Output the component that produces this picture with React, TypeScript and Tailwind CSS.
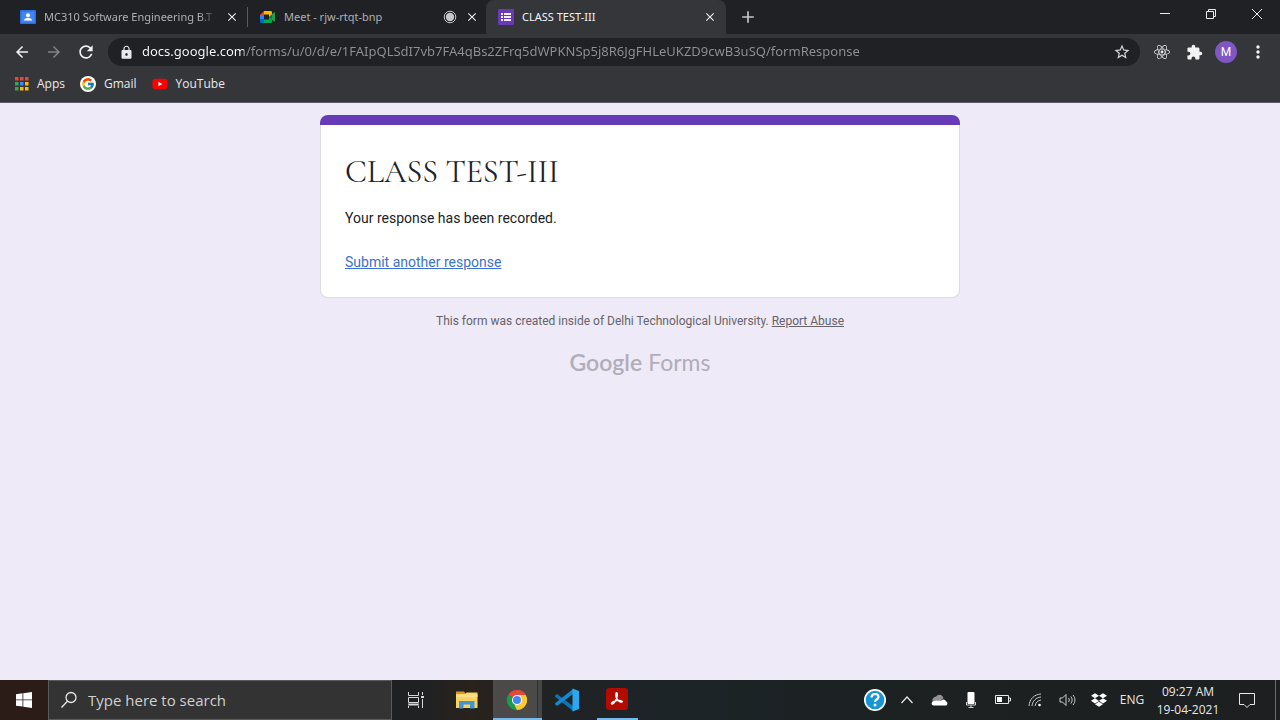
import type { ReactNode } from 'react';
import {
  MdAdd,
  MdArrowBack,
  MdArrowForward,
  MdClose,
  MdExtension,
  MdLock,
  MdMoreVert,
  MdRefresh,
  MdStarBorder,
} from 'react-icons/md';
import { FcGoogle } from 'react-icons/fc';
import { FaReact, FaDropbox, FaYoutube } from 'react-icons/fa';

function ContactsIcon() {
  return (
    <svg viewBox="0 0 16 16" className="size-4 shrink-0" aria-hidden="true">
      <rect y="1" width="16" height="14" rx="1" fill="#2a6fdb" />
      <rect x="1.5" y="2.5" width="13" height="11" fill="#4285f4" />
      <circle cx="8" cy="6.2" r="2" fill="#fff" />
      <path d="M4 11.6c0-2 2.4-2.8 4-2.8s4 .8 4 2.8z" fill="#fff" />
    </svg>
  );
}

function MeetIcon() {
  return (
    <svg viewBox="0 0 16 16" className="size-4 shrink-0" aria-hidden="true">
      <path d="M0 6l4-4v4z" fill="#ea4335" />
      <path d="M0 6h4v4H0z" fill="#2684fc" />
      <path d="M0 10h4v4H1.3A1.3 1.3 0 010 12.700z" fill="#0066da" />
      <path d="M4 2h6.700A1.300 1.300 0 0112 3.300V8H9V5.500H4z" fill="#ffba00" />
      <path d="M4 10.500h5V8h3v4.700a1.300 1.300 0 01-1.300 1.300H4z" fill="#00ac47" />
      <path d="M9 8l5-4.500c.4-.4 1-.1 1 .5v8c0 .6-.6.9-1 .5z" fill="#1fa04c" />
      <path d="M9 8l3-2.700v5.400z" fill="#00832d" />
    </svg>
  );
}

function FormsIcon() {
  return (
    <svg viewBox="0 0 16 16" className="size-4 shrink-0" aria-hidden="true">
      <rect width="16" height="16" rx="1" fill="#673ab7" />
      <path
        d="M3 4h2v2H3zM3 7h2v2H3zM3 10h2v2H3zM6 4h7v2H6zM6 7h7v2H6zM6 10h7v2H6z"
        fill="#f3eefb"
      />
    </svg>
  );
}

function RecordingIcon() {
  return (
    <svg viewBox="0 0 14 14" className="size-3.5 shrink-0" role="img" aria-label="Recording">
      <circle cx="7" cy="7" r="5.800" fill="none" stroke="#c4c6c9" />
      <circle cx="7" cy="7" r="4.200" fill="#c4c6c9" />
    </svg>
  );
}

function AppsIcon() {
  const colors = ['#e5493a', '#e5493a', '#e5493a', '#34a853', '#4285f4', '#fbbc05', '#34a853', '#fbbc05', '#fbbc05'];
  return (
    <svg viewBox="0 0 14 14" className="size-3.5" aria-hidden="true">
      {colors.map((color, i) => (
        <rect key={i} x={(i % 3) * 5} y={Math.floor(i / 3) * 5} width="3.500" height="3.500" fill={color} />
      ))}
    </svg>
  );
}

function Tab({ icon, title, active, recording }: { icon: ReactNode; title: string; active?: boolean; recording?: boolean }) {
  return (
    <div
      className={
        active
          ? 'flex h-full min-w-0 flex-[0_1_240px] items-center gap-2 rounded-t-lg bg-[#35363a] pr-[9px] pl-3 text-[#f1f3f4]'
          : 'flex h-full min-w-0 flex-[0_1_238px] items-center gap-2 pr-[7px] pl-3 text-[#aeb1b5]'
      }
    >
      {icon}
      <button
        className={
          active || recording
            ? 'min-w-0 flex-1 overflow-hidden text-left whitespace-nowrap'
            : 'min-w-0 flex-1 overflow-hidden mask-r-from-90% text-left whitespace-nowrap'
        }
      >
        {title}
      </button>
      {recording && <RecordingIcon />}
      <button aria-label={`Close ${title}`} className="shrink-0 text-[#e8eaed]">
        <MdClose className="size-3.5" />
      </button>
    </div>
  );
}

function BarButton({ label, children }: { label: string; children: ReactNode }) {
  return (
    <button aria-label={label} className="flex h-7 w-8 shrink-0 items-center justify-center text-[#f1f3f4]">
      {children}
    </button>
  );
}

function TabStrip() {
  return (
    <header className="flex h-[34px] items-center bg-[#202124] pl-2 font-['Noto_Sans',sans-serif] text-[11px]">
      <Tab icon={<ContactsIcon />} title="MC310 Software Engineering B.T" />
      <div className="ml-px h-5 w-px shrink-0 bg-[#5a5c60]" />
      <Tab icon={<MeetIcon />} title="Meet - rjw-rtqt-bnp" recording />
      <Tab icon={<FormsIcon />} title="CLASS TEST-III" active />
      <button aria-label="New tab" className="ml-3 text-[#c4c6c9]">
        <MdAdd className="size-5" />
      </button>
      <div className="mb-1.5 ml-auto flex">
        <button aria-label="Minimize" className="flex w-[46px] justify-center">
          <svg viewBox="0 0 12 12" className="size-3" fill="none" stroke="#e8eaed">
            <path d="M1 5.500h10" />
          </svg>
        </button>
        <button aria-label="Restore" className="flex w-[46px] justify-center">
          <svg viewBox="0 0 12 12" className="size-3" fill="none" stroke="#e8eaed">
            <path d="M1.500 3.500h7v7h-7zM3.500 3.500v-2h7v7h-2" />
          </svg>
        </button>
        <button aria-label="Close window" className="flex w-[46px] justify-center">
          <svg viewBox="0 0 12 12" className="size-3" fill="none" stroke="#e8eaed">
            <path d="M1 1l10 10M11 1L1 11" />
          </svg>
        </button>
      </div>
    </header>
  );
}

function Toolbar() {
  return (
    <div className="flex h-9 items-center bg-[#35363a] px-1.5">
      <BarButton label="Back">
        <MdArrowBack className="size-[18px]" />
      </BarButton>
      <BarButton label="Forward">
        <MdArrowForward className="size-[18px] text-[#818387]" />
      </BarButton>
      <BarButton label="Reload">
        <MdRefresh className="size-5" />
      </BarButton>
      <label className="mx-1.5 flex h-7 min-w-0 flex-1 items-center gap-2 rounded-full bg-[#202124] pr-0.5 pl-[11px]">
        <MdLock className="size-[15px] shrink-0 text-[#e8eaed]" />
        <input
          aria-label="Address"
          className="min-w-0 flex-1 bg-[linear-gradient(90deg,#ffffff_102px,#8f9195_102px)] bg-clip-text font-['Noto_Sans',sans-serif] text-[13px] text-transparent outline-none"
          defaultValue="docs.google.com/forms/u/0/d/e/1FAIpQLSdI7vb7FA4qBs2ZFrq5dWPKNSp5j8R6JgFHLeUKZD9cwB3uSQ/formResponse"
        />
        <BarButton label="Bookmark this page">
          <MdStarBorder className="size-[18px] text-[#d5d7da]" />
        </BarButton>
      </label>
      <BarButton label="React Developer Tools">
        <FaReact className="size-4 text-[#e8eaed]" />
      </BarButton>
      <BarButton label="Extensions">
        <MdExtension className="size-[17px]" />
      </BarButton>
      <BarButton label="Profile">
        <span className="flex size-[22px] items-center justify-center rounded-full bg-[#7e57c2] font-['Roboto',sans-serif] text-xs text-white">
          M
        </span>
      </BarButton>
      <BarButton label="Menu">
        <MdMoreVert className="size-5" />
      </BarButton>
    </div>
  );
}

function Bookmarks() {
  return (
    <nav className="flex h-8 items-center gap-[15px] bg-[#35363a] px-[15px] pb-1 text-xs text-[#e8eaed]">
      <a href="#apps" className="flex items-center gap-2">
        <AppsIcon />
        Apps
      </a>
      <a href="#gmail" className="flex items-center gap-2">
        <span className="flex size-4 items-center justify-center rounded-full bg-white">
          <FcGoogle className="size-3.5" />
        </span>
        Gmail
      </a>
      <a href="#youtube" className="flex items-center gap-2">
        <span className="flex h-2 w-4 items-center justify-center bg-[linear-gradient(90deg,transparent_5px,#ffffff_5px,#ffffff_11px,transparent_11px)]">
          <FaYoutube className="size-4 shrink-0 text-[#f00]" />
        </span>
        YouTube
      </a>
    </nav>
  );
}

function FormResponse() {
  return (
    <main className="flex flex-1 flex-col items-center border-t border-[#5a5862] bg-[#eeeaf7] px-4 pt-3 font-['Roboto',sans-serif]">
      <section className="w-full max-w-[640px]">
        <div className="h-2.5 rounded-t-lg bg-[#673ab7]" />
        <div className="rounded-b-lg border border-t-0 border-[#dadce0] bg-white px-6 pt-[25px] pb-[23px]">
          <h1 className="font-['Cormorant_Garamond','Liberation_Serif',serif] text-[32px] leading-11 text-[#202124]">
            CLASS TEST-III
          </h1>
          <p className="mt-3.5 text-sm leading-5 text-[#202124]">Your response has been recorded.</p>
          <a href="#another" className="mt-6 inline-block text-sm leading-5 text-[#3b72cf] underline">
            Submit another response
          </a>
        </div>
      </section>
      <p className="mt-[15px] text-xs leading-4 text-[#66636b]">
        This form was created inside of Delhi Technological University.{' '}
        <a href="#report" className="underline">
          Report Abuse
        </a>
      </p>
      <a href="#forms" className="mt-[17px] flex gap-1.5 font-['Lato',sans-serif] text-[23px] leading-8 text-[#b1adb9]">
        <span className="font-semibold">Google</span>
        <span>Forms</span>
      </a>
    </main>
  );
}

function TrayButton({ label, children }: { label: string; children: ReactNode }) {
  return (
    <button aria-label={label} className="flex h-full w-8 shrink-0 items-center justify-center">
      {children}
    </button>
  );
}

function Taskbar() {
  return (
    <footer className="flex h-10 items-center bg-[linear-gradient(90deg,#2b1c18_0,#2b1c18_48px,#1f2123_420px,#29221d_470px,#202225_560px,#1c2427_680px,#1c2122_900px,#1d1f20_100%)] text-[#e8e8e8]">
      <button aria-label="Start" className="flex h-full w-12 shrink-0 items-center justify-center">
        <svg viewBox="0 0 16 16" className="size-4" fill="#fff">
          <path d="M0 2.200l6.500-.9v6.200H0zM7.300 1.200L16 0v7.500H7.300zM0 8.300h6.500v6.300L0 13.700zM7.300 8.300H16V16l-8.700-1.200z" />
        </svg>
      </button>
      <label className="flex h-full min-w-0 flex-[0_1_344px] items-center gap-2.5 border border-[#5a5a5a] bg-[#333333] px-[11px]">
        <svg viewBox="0 0 18 18" className="size-[18px] shrink-0" fill="none" stroke="#e8e8e8" strokeWidth="1.300">
          <circle cx="11" cy="6.500" r="5" />
          <path d="M7.400 10.200L1.500 16.500" />
        </svg>
        <input
          aria-label="Search Windows"
          placeholder="Type here to search"
          className="min-w-0 flex-1 bg-transparent text-[15px] outline-none placeholder:text-[#d0d0d0]"
        />
      </label>
      <button aria-label="Task view" className="flex h-full w-12 shrink-0 items-center justify-center">
        <svg viewBox="0 0 18 18" className="size-[18px]" fill="none" stroke="#d8d8d8">
          <path d="M1.500 1v3.500h10V1M1.500 6.500h10v5h-10zM1.500 17v-3.500h10V17M15.500 1v3M15.500 8v9" />
          <path d="M1 12.500h11M1 14.500h11" stroke="#77787a" />
          <path d="M14 6h3" strokeWidth="2" />
        </svg>
      </button>
      <button aria-label="File Explorer" className="ml-0.5 flex h-full w-[50px] shrink-0 items-center justify-center">
        <svg viewBox="0 0 22 20" className="h-5 w-[22px]">
          <path d="M0 1.500h8l2 2.500H0z" fill="#d99a1e" />
          <path d="M0 4h9l1.500-1.500H21.500V18H0z" fill="#fbd160" />
          <path d="M0 4.500h21.500V7H0z" fill="#ffe08a" />
          <path d="M3 11h15.500v7.500H14v-4H7.500v4H3z" fill="#3e96d4" />
        </svg>
      </button>
      <button
        aria-label="Google Chrome"
        className="ml-px flex h-full w-[49px] shrink-0 items-center justify-center border-b-2 border-[#76b9ed] bg-[linear-gradient(90deg,#4b4a49_44px,#303131_44px,#303131_45px,#454646_45px)] pt-0.5 pr-0.5"
      >
        <svg viewBox="0 0 24 24" className="size-[22px]">
          <path d="M12 12L2.470 6.500A11 11 0 0121.530 6.500z" fill="#e5473a" />
          <path d="M12 12L21.530 6.500A11 11 0 0112 23z" fill="#fcc934" />
          <path d="M12 12L12 23A11 11 0 012.470 6.500z" fill="#1e9b4f" />
          <path d="M12 6.500h9.530L16.800 14.700zM16.760 14.750L12 23l-3-6z" fill="#fcc934" />
          <path d="M12 6.500h9.530A11 11 0 0012 1z" fill="#e5473a" />
          <path d="M7.240 14.750L2.470 6.500 12 12z" fill="#1e9b4f" />
          <circle cx="12" cy="12" r="5.500" fill="#fff" />
          <circle cx="12" cy="12" r="4.400" fill="#4285f4" />
        </svg>
      </button>
      <button aria-label="Visual Studio Code" className="flex h-full w-[50px] shrink-0 items-center justify-center">
        <svg viewBox="0 0 24 24" className="size-6">
          <path d="M0 7.800l2-1.700L18 18v5L.4 9z" fill="#0a76b8" />
          <path d="M0 16.200l2 1.700L18 6V1L.4 15z" fill="#1389d2" />
          <path d="M17.500.5L24 3v18l-6.500 2.500z" fill="#29a7f0" />
        </svg>
      </button>
      <button aria-label="Adobe Acrobat" className="flex h-full w-[50px] shrink-0 flex-col items-center justify-between pt-2">
        <svg viewBox="0 0 22 22" className="size-[22px]">
          <rect width="22" height="22" rx="3.500" fill="#b30b00" />
          <path
            d="M10.500 4.800c1.300 0 .9 3 .2 5-1 2.600-3 6.200-4.500 6.200-1.400 0-.7-1.600 1.700-2.500 2.400-.9 5.900-1.400 7.600-.7 1.500.7.6 1.700-.9 1.200-2-.7-3.800-3.200-4.400-4.800-.5-1.600-.6-4.400.3-4.400z"
            fill="none"
            stroke="#fff"
            strokeWidth="1.400"
          />
        </svg>
        <span className="h-0.5 w-[41px] bg-[#76b9ed]" />
      </button>
      <div className="ml-auto flex h-full shrink-0 items-center">
        <TrayButton label="Help">
          <svg viewBox="0 0 22 22" className="size-[22px]" fill="none">
            <circle cx="11" cy="11" r="11" fill="#fff" />
            <circle cx="11" cy="11" r="9.300" fill="#1796d4" />
            <path d="M7.500 8.500C7.500 3.800 14.500 4 14.500 8c0 2.500-3.500 2.500-3.500 5" stroke="#fff" strokeWidth="2.200" />
            <circle cx="11" cy="16" r="1.500" fill="#fff" />
          </svg>
        </TrayButton>
        <TrayButton label="Show hidden icons">
          <svg viewBox="0 0 14 14" className="size-3.5" fill="none" stroke="#e8e8e8" strokeWidth="1.200">
            <path d="M1.500 10L7 4l5.500 6" />
          </svg>
        </TrayButton>
        <TrayButton label="OneDrive">
          <svg viewBox="0 0 17 14" className="h-3.5 w-[17px]">
            <path d="M1.500 9C.8 5 3.500 3.500 5 3.800 6.500.5 11.500 1 12.500 5L8 9z" fill="#929494" />
            <path d="M3 12.500c-3.300 0-3-4.200 0-4.300 2.500-1 5.500.3 8-1.200 2-1 3.500.1 3.700 1.300 2.500.6 2.200 4.200-.4 4.200z" fill="#fff" />
          </svg>
        </TrayButton>
        <TrayButton label="Microphone in use">
          <svg viewBox="0 0 14 18" className="h-[18px] w-3.5" fill="none">
            <rect x="3.500" y="1" width="7" height="12" rx="1" fill="#fff" />
            <path d="M2.500 11v3h9v-3M7 14v3M4.500 16.500h5" stroke="#cfcfcf" />
          </svg>
        </TrayButton>
        <TrayButton label="Battery">
          <svg viewBox="0 0 16 10" className="h-2.5 w-4" fill="none" stroke="#e8e8e8">
            <path d="M.5.500h13v8H.5zM13.500 3h2v3h-2" />
            <path d="M2 2h5v5H2z" fill="#fff" stroke="none" />
          </svg>
        </TrayButton>
        <TrayButton label="Wi-Fi">
          <svg viewBox="0 0 14 14" className="size-3.5" fill="none" stroke="#c5c7c7">
            <path d="M1 13C1.500 6 6 1.500 13 1M4 13c.5-5 4-8.500 9-9M7 13c.3-3 3-5.700 6-6" />
            <circle cx="11.500" cy="12" r="1.300" fill="#fff" stroke="none" />
          </svg>
        </TrayButton>
        <TrayButton label="Volume">
          <svg viewBox="0 0 17 14" className="h-3.5 w-[17px]" fill="none" stroke="#c9cbcb">
            <path d="M1 5h2.500L7 1.500v11L3.500 9H1zM9.500 5c1 1.200 1 2.800 0 4M11.800 3.500c1.800 2 1.800 5 0 7M14 2c2.600 3 2.600 7 0 10" />
          </svg>
        </TrayButton>
        <TrayButton label="Dropbox">
          <FaDropbox className="size-4 text-white" />
        </TrayButton>
        <button className="w-[34px] text-xs">ENG</button>
        <button className="flex h-full w-[78px] flex-col items-center justify-center pt-0.5 text-xs leading-[18px]">
          <span>09:27 AM</span>
          <span>19-04-2021</span>
        </button>
        <button aria-label="Notifications" className="flex h-full w-10 items-center justify-center">
          <svg viewBox="0 0 18 18" className="size-[18px]" fill="none" stroke="#e8e8e8">
            <path d="M1.500 2.500h15v11H12l-3 3-3-3H1.500z" />
          </svg>
        </button>
        <button aria-label="Show desktop" className="ml-2 h-full w-[5px] border-l border-[#6a6c6c]" />
      </div>
    </footer>
  );
}

export default function App() {
  return (
    <div className="flex min-h-screen flex-col font-['Open_Sans','Noto_Sans',sans-serif]">
      <TabStrip />
      <Toolbar />
      <Bookmarks />
      <FormResponse />
      <Taskbar />
    </div>
  );
}
